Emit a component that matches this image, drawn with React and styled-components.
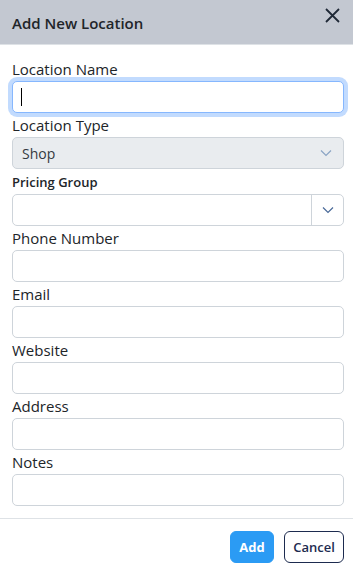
import React from 'react';
import styled, { createGlobalStyle } from "styled-components";

const GlobalStyle = createGlobalStyle`
    body {
        margin: 0;
        background: #fff;
        font-family: "Open Sans", "Noto Sans", sans-serif;
        color: #212529;
    }
    * { box-sizing: border-box; }
`;

const Modal = styled.div`
    width: 353px;
    background: #fff;
`;

const Header = styled.div`
    height: 45px;
    background-color: #c3c8d1;
    border-bottom: 1px solid #dee2e6;
    display: flex;
    align-items: center;
    justify-content: space-between;
    padding: 0 12px;
`;

const Title = styled.h5`
    margin: 0;
    font-size: 15px;
    font-weight: 600;
    color: #212529;
    line-height: 24px;
    padding-top: 1px;
`;

const CloseButton = styled.button`
    border: none;
    background: none;
    padding: 0;
    width: 18px;
    height: 18px;
    margin-top: -14px;
    display: flex;
    align-items: center;
    justify-content: center;
    cursor: pointer;
`;

const Body = styled.div`
    padding: 12px 9px 12px 12px;
    display: flex;
    flex-direction: column;
`;

const Label = styled.label`
    font-size: ${(p) => (p.small ? "13px" : "15px")};
    font-weight: ${(p) => (p.small ? 600 : 400)};
    line-height: 24px;
    color: #212529;
    display: block;
    padding-top: ${(p) => (p.small ? "1px" : "0")};
`;

const InputWrap = styled.div`
    position: relative;
`;

const Caret = styled.span`
    position: absolute;
    left: 9px;
    top: 7px;
    width: 1px;
    height: 18px;
    background: #000;
`;

const Input = styled.input`
    display: block;
    width: 100%;
    height: 32px;
    border: 1px solid ${(p) => (p.focused ? "#86b7fe" : "#ced4da")};
    border-radius: 5px;
    padding: 0 8px;
    font-size: 14px;
    font-family: inherit;
    outline: none;
    caret-color: transparent;
    box-shadow: ${(p) => (p.focused ? "0 0 0 4px rgba(13, 110, 253, 0.25)" : "none")};
    background: #fff;
`;

const SelectBox = styled.div`
    height: 32px;
    border: 1px solid #ced4da;
    border-radius: 5px;
    background: ${(p) => (p.disabled ? "#e9ecef" : "#fff")};
    display: flex;
    align-items: center;
    font-size: 14px;
    color: #343a40;
`;

const SelectValue = styled.div`
    flex: 1;
    padding-left: 9px;
`;

const Arrow = styled.div`
    width: ${(p) => (p.divided ? "32px" : "34px")};
    height: 100%;
    display: flex;
    align-items: center;
    justify-content: center;
    border-left: ${(p) => (p.divided ? "1px solid #ced4da" : "none")};
`;

const Footer = styled.div`
    border-top: 1px solid #dee2e6;
    padding: 12px 9px 12px 12px;
    display: flex;
    justify-content: flex-end;
    gap: 10px;
`;

const Button = styled.button`
    height: 32px;
    min-width: ${(p) => (p.primary ? "44px" : "60px")};
    padding: 0 8px;
    border-radius: 6px;
    font-family: inherit;
    font-size: 13px;
    font-weight: ${(p) => (p.primary ? 700 : 600)};
    background: ${(p) => (p.primary ? "#2b9bf4" : "#fff")};
    color: ${(p) => (p.primary ? "#fff" : "#1d2b4f")};
    border: 1px solid ${(p) => (p.primary ? "#2b9bf4" : "#1d2b4f")};
    cursor: pointer;
`;

const Chevron = ({ color }) => (
    <svg width="12" height="8" viewBox="0 0 12 8">
        <path d="M1 1.5 L6 6.5 L11 1.5" fill="none" stroke={color} strokeWidth="1.2" />
    </svg>
);

const fields = ["Phone Number", "Email", "Website", "Address", "Notes"];

const App = () => {
    return (
        <Modal>
            <GlobalStyle />
            <Header>
                <Title>Add New Location</Title>
                <CloseButton aria-label="Close">
                    <svg width="15" height="15" viewBox="0 0 15 15">
                        <path d="M1 1 L14 14 M14 1 L1 14" stroke="#1f2937" strokeWidth="1.8" />
                    </svg>
                </CloseButton>
            </Header>
            <Body>
                <Label>Location Name</Label>
                <InputWrap>
                    <Input focused />
                    <Caret />
                </InputWrap>
                <Label>Location Type</Label>
                <SelectBox disabled>
                    <SelectValue>Shop</SelectValue>
                    <Arrow><Chevron color="#8aa4c4" /></Arrow>
                </SelectBox>
                <Label small>Pricing Group</Label>
                <SelectBox>
                    <SelectValue />
                    <Arrow divided><Chevron color="#4a6a99" /></Arrow>
                </SelectBox>
                {fields.map((f) => (
                    <div key={f}>
                        <Label>{f}</Label>
                        <Input />
                    </div>
                ))}
            </Body>
            <Footer>
                <Button primary>Add</Button>
                <Button>Cancel</Button>
            </Footer>
        </Modal>
    );
};

export default App;
